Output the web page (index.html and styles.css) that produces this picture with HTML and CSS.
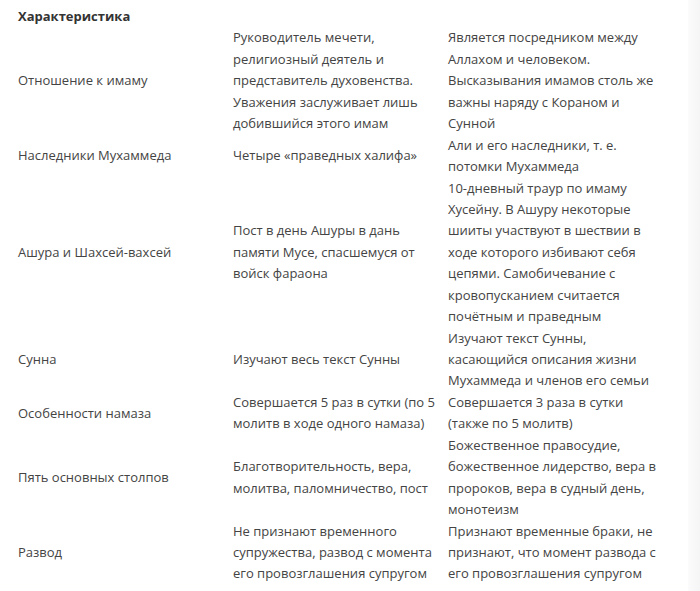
FILE: index.html
```html
<!DOCTYPE html>
<html lang="ru">
<head>
<meta charset="utf-8">
<link rel="stylesheet" href="styles.css">
</head>
<body>
<div class="page">
  <table class="cmp">
    <colgroup><col class="c"><col class="c"><col class="c"></colgroup>
    <thead>
      <tr><th>Характеристика</th><th></th><th></th></tr>
    </thead>
    <tbody>
      <tr><td>Отношение к имаму</td><td>Руководитель мечети, религиозный деятель и представитель духовенства. Уважения заслуживает лишь добившийся этого имам</td><td>Является посредником между Аллахом и человеком. Высказывания имамов столь же важны наряду с Кораном и Сунной</td></tr>
      <tr><td>Наследники Мухаммеда</td><td>Четыре «праведных халифа»</td><td>Али и его наследники, т. е. потомки Мухаммеда</td></tr>
      <tr><td>Ашура и Шахсей-вахсей</td><td>Пост в день Ашуры в дань памяти Мусе, спасшемуся от войск фараона</td><td>10-дневный траур по имаму Хусейну. В Ашуру некоторые шииты участвуют в шествии в ходе которого избивают себя цепями. Самобичевание с кровопусканием считается почётным и праведным</td></tr>
      <tr><td>Сунна</td><td>Изучают весь текст Сунны</td><td>Изучают текст Сунны, касающийся описания жизни Мухаммеда и членов его семьи</td></tr>
      <tr><td>Особенности намаза</td><td>Совершается 5 раз в сутки (по 5 молитв в ходе одного намаза)</td><td>Совершается 3 раза в сутки (также по 5 молитв)</td></tr>
      <tr><td>Пять основных столпов</td><td>Благотворительность, вера, молитва, паломничество, пост</td><td>Божественное правосудие, божественное лидерство, вера в пророков, вера в судный день, монотеизм</td></tr>
      <tr><td>Развод</td><td>Не признают временного супружества, развод с момента его провозглашения супругом</td><td>Признают временные браки, не признают, что момент развода с его провозглашения супругом</td></tr>
    </tbody>
  </table>
  <div class="edge"></div>
</div>
</body>
</html>
```

FILE: styles.css
```css
html, body {
  margin: 0;
  padding: 0;
  background: #ffffff;
}
.page {
  display: flex;
  width: 700px;
  height: 591px;
  overflow: hidden;
}
.cmp {
  border-collapse: collapse;
  table-layout: fixed;
  width: 645px;
  margin: 6px 0 0 15px;
  align-self: flex-start;
  font-family: "Open Sans", "Noto Sans", sans-serif;
  font-size: 13px;
  line-height: 21.44px;
  color: #444444;
}
.c { width: 215px; }
.cmp th {
  text-align: left;
  font-weight: 700;
  color: #333333;
  padding: 0 3px;
}
.cmp td {
  padding: 0 3px;
  vertical-align: middle;
}
.edge {
  margin-left: auto;
  width: 12px;
  height: 100%;
  background: linear-gradient(to right, #fbfbfb, #f5f5f5);
}
```
